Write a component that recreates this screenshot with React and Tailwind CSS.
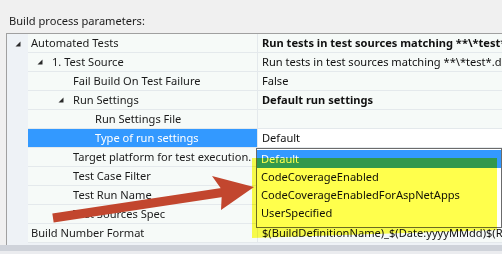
const rows = [
  { label: "Automated Tests", pad: "pl-[3px]", tri: "gutter", value: "Run tests in test sources matching **\\*test*.dll", bold: true },
  { label: "1. Test Source", pad: "pl-[9px]", tri: "inline", value: "Run tests in test sources matching **\\*test*.dll" },
  { label: "Fail Build On Test Failure", pad: "pl-[45px]", value: "False" },
  { label: "Run Settings", pad: "pl-[30px]", tri: "inline", value: "Default run settings", bold: true },
  { label: "Run Settings File", pad: "pl-[67px]", value: "" },
  { label: "Type of run settings", pad: "pl-[67px]", value: "Default", selected: true },
  { label: "Target platform for test execution.", pad: "pl-[45px]", value: "" },
  { label: "Test Case Filter", pad: "pl-[45px]", value: "" },
  { label: "Test Run Name", pad: "pl-[45px]", value: "" },
  { label: "Test Sources Spec", pad: "pl-[45px]", value: "" },
  { label: "Build Number Format", pad: "pl-[3px]", value: "$(BuildDefinitionName)_$(Date:yyyyMMdd)$(Rev:.r)" },
];

const options = ["Default", "CodeCoverageEnabled", "CodeCoverageEnabledForAspNetApps", "UserSpecified"];

function Tri() {
  return (
    <svg width="6" height="6" viewBox="0 0 6 6" className="shrink-0">
      <polygon points="5.5,0.5 5.5,5.5 0.5,5.5" fill="#2a2a2a" />
    </svg>
  );
}

function Row({ row }) {
  return (
    <div className="flex h-[19px]">
      <div className="flex w-[21px] shrink-0 items-center bg-[#eef2f6] pl-[8px]">
        {row.tri === "gutter" && <Tri />}
      </div>
      <div
        className={`flex w-[229px] shrink-0 items-center overflow-hidden whitespace-nowrap border-b border-[#e4e9ec] ${row.pad} ${
          row.selected ? "bg-[#3399ff] text-white" : "bg-[#f6faf8] text-[#1b1b1b]"
        }`}
      >
        {row.tri === "inline" && (
          <span className="flex w-[15px] shrink-0 items-center">
            <Tri />
          </span>
        )}
        {row.label}
      </div>
      <div
        className={`flex min-w-0 flex-1 items-center overflow-hidden whitespace-nowrap border-b border-l border-[#e4e9ec] pl-[4px] text-[#111] ${
          row.selected ? "bg-white" : "bg-[#f6faf8]"
        } ${row.bold ? "font-bold" : ""}`}
      >
        {row.value}
      </div>
    </div>
  );
}

export default function App() {
  return (
    <div className="relative h-[254px] w-[502px] overflow-hidden bg-[#f0f0f0] font-['Segoe_UI','Noto_Sans',sans-serif] text-[11.1px] leading-none">
      <div className="h-[33px] pl-[9px] pt-[15px] text-[#1b1b1b]">Build process parameters:</div>

      <div className="ml-[6px] border-l border-t border-[#a0a0a0]">
        {rows.map((r) => (
          <Row key={r.label} row={r} />
        ))}
        <div className="h-[2px] bg-[#eef2f6]" />
      </div>
      <div className="h-[6px] bg-[#cfd3da]" />
      <div className="h-[10px] bg-[#ebecef]" />

      {/* dropdown list */}
      <div className="absolute left-[256px] top-[148px] h-[80px] w-[246px] border border-[#6b6b6b] bg-white pt-[1px]">
        {options.map((o, i) => (
          <div
            key={o}
            className={`flex h-[18px] items-center pl-[4px] ${i === 0 ? "bg-[#3399ff] text-white" : "text-[#111]"}`}
          >
            {o}
          </div>
        ))}
      </div>

      {/* marker highlight */}
      <svg className="pointer-events-none absolute left-0 top-0 mix-blend-multiply" width="502" height="254">
        <polygon points="252,158 497,158 497,230 252,238" fill="#ffff4c" />
      </svg>

      {/* arrow */}
      <svg className="pointer-events-none absolute left-0 top-0" width="502" height="254">
        <line x1="53" y1="218" x2="232" y2="191" stroke="#c2462e" strokeWidth="9" />
        <polygon points="254,187 212,176 222,190 221,210" fill="#c2462e" />
      </svg>
    </div>
  );
}
